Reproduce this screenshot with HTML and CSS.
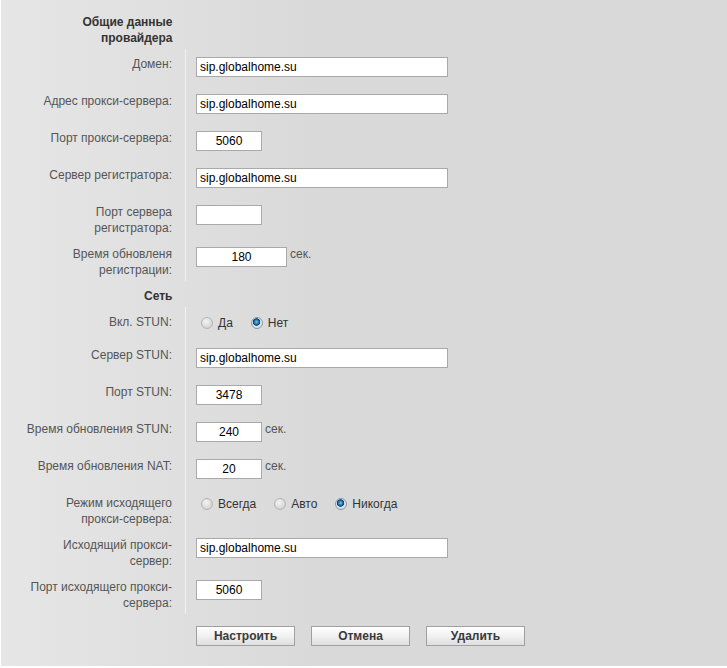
FILE: index.html
```html
<!DOCTYPE html>
<html lang="ru">
<head>
    <meta charset="UTF-8">
    <title>SIP-провайдер</title>
    <link rel="stylesheet" href="styles.css">
</head>
<body>
<div class="panel">
    <table class="form">
        <tr class="section">
            <th>Общие данные<br>провайдера</th>
            <td></td>
        </tr>
        <tr>
            <th>Домен:</th>
            <td><input type="text" class="field wide" value="sip.globalhome.su"></td>
        </tr>
        <tr>
            <th>Адрес прокси-сервера:</th>
            <td><input type="text" class="field wide" value="sip.globalhome.su"></td>
        </tr>
        <tr>
            <th>Порт прокси-сервера:</th>
            <td><input type="text" class="field short" value="5060"></td>
        </tr>
        <tr>
            <th>Сервер регистратора:</th>
            <td><input type="text" class="field wide" value="sip.globalhome.su"></td>
        </tr>
        <tr>
            <th>Порт сервера<br>регистратора:</th>
            <td><input type="text" class="field short" value=""></td>
        </tr>
        <tr>
            <th>Время обновленя<br>регистрации:</th>
            <td><input type="text" class="field mid" value="180"><span class="unit">сек.</span></td>
        </tr>
        <tr class="section">
            <th>Сеть</th>
            <td></td>
        </tr>
        <tr>
            <th>Вкл. STUN:</th>
            <td class="choice">
                <div class="radios">
                    <label><input type="radio" name="stun"> Да</label>
                    <label><input type="radio" name="stun" checked> Нет</label>
                </div>
            </td>
        </tr>
        <tr>
            <th>Сервер STUN:</th>
            <td><input type="text" class="field wide" value="sip.globalhome.su"></td>
        </tr>
        <tr>
            <th>Порт STUN:</th>
            <td><input type="text" class="field short" value="3478"></td>
        </tr>
        <tr>
            <th>Время обновления STUN:</th>
            <td><input type="text" class="field short" value="240"><span class="unit">сек.</span></td>
        </tr>
        <tr>
            <th>Время обновления NAT:</th>
            <td><input type="text" class="field short" value="20"><span class="unit">сек.</span></td>
        </tr>
        <tr>
            <th>Режим исходящего<br>прокси-сервера:</th>
            <td class="choice">
                <div class="radios">
                    <label><input type="radio" name="outbound"> Всегда</label>
                    <label><input type="radio" name="outbound"> Авто</label>
                    <label><input type="radio" name="outbound" checked> Никогда</label>
                </div>
            </td>
        </tr>
        <tr>
            <th>Исходящий прокси-<br>сервер:</th>
            <td><input type="text" class="field wide" value="sip.globalhome.su"></td>
        </tr>
        <tr>
            <th>Порт исходящего прокси-<br>сервера:</th>
            <td><input type="text" class="field short" value="5060"></td>
        </tr>
    </table>
    <div class="actions">
        <button class="btn">Настроить</button>
        <button class="btn">Отмена</button>
        <button class="btn">Удалить</button>
    </div>
</div>
</body>
</html>
```

FILE: styles.css
```css
body {
    margin: 0;
    background-color: #ffffff;
    font-family: "Liberation Sans", Arial, sans-serif;
    font-size: 12px;
}
.panel {
    margin-left: 1px;
    height: 666px;
    padding-top: 7px;
    box-sizing: border-box;
    background: linear-gradient(to right, #e6e6e6 0, #d9d9d9 320px);
}
.form {
    border-collapse: collapse;
    border-spacing: 0;
}
.form th {
    width: 171px;
    padding: 7px 13px 3px 0;
    text-align: right;
    vertical-align: top;
    font-weight: normal;
    line-height: 16px;
    color: #555555;
    border-right: 1px solid #f2f2f2;
}
.form td {
    padding: 8px 0 9px 10px;
    vertical-align: top;
    line-height: 16px;
    white-space: nowrap;
}
.form .section th {
    font-weight: bold;
    color: #333333;
    border-right: none;
}
.form .section td {
    padding: 0;
}
.field {
    height: 20px;
    box-sizing: border-box;
    margin: 0;
    padding: 0 3px;
    border: 1px solid #a9a9a9;
    background-color: #ffffff;
    font-family: "Liberation Sans", Arial, sans-serif;
    font-size: 12px;
    color: #000000;
    vertical-align: top;
}
.wide {
    width: 252px;
}
.short {
    width: 66px;
    text-align: center;
}
.mid {
    width: 91px;
    text-align: center;
}
.unit {
    display: inline-block;
    margin: -1px 0 0 3px;
    vertical-align: top;
    color: #555555;
}
.form td.choice {
    padding-top: 8px;
    padding-bottom: 9px;
}
.radios {
    display: flex;
    align-items: center;
    height: 16px;
    padding-left: 5px;
    color: #333333;
}
.radios label {
    display: flex;
    align-items: center;
    margin-right: 18px;
}
.radios input {
    appearance: none;
    -webkit-appearance: none;
    width: 12px;
    height: 12px;
    margin: 0 5px 0 0;
    border: 1px solid #b4b4b4;
    border-radius: 50%;
    box-sizing: border-box;
    background: radial-gradient(circle at 40% 35%, #f4f4f4 0, #dadada 60%, #c8c8c8 100%);
}
.radios input:checked {
    border-color: #8a9aa8;
    background: radial-gradient(circle at 45% 40%, #7fc4ee 0, #1f6fa6 28%, #0d3f66 42%, #dfe6ec 50%, #c9d1d8 100%);
}
.actions {
    display: flex;
    gap: 16px;
    margin-top: 12px;
    padding-left: 195px;
}
.btn {
    width: 99px;
    height: 20px;
    padding: 0;
    border: 1px solid #a0a0a0;
    background: linear-gradient(#ffffff, #f1f1f1 50%, #dedede);
    font-family: "Liberation Sans", Arial, sans-serif;
    font-size: 12px;
    font-weight: bold;
    color: #3a3a3a;
}
```
